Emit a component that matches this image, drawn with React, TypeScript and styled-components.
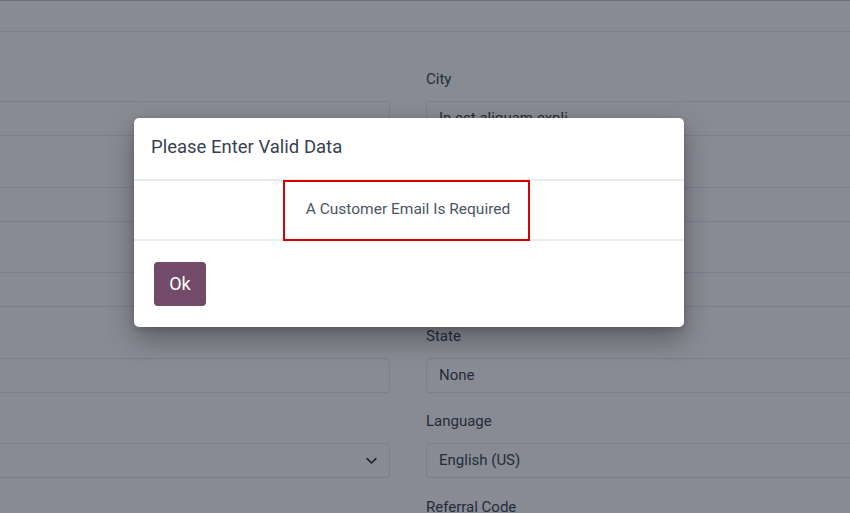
import type React from "react";
import styled, { createGlobalStyle } from "styled-components";

// 전역 스타일
const GlobalStyle = createGlobalStyle`
  html, body {
    margin: 0;
    padding: 0;
    background: #ffffff;
    overflow: hidden;
  }
  * {
    box-sizing: border-box;
  }
  body {
    font-family: "Roboto", "Liberation Sans", sans-serif;
    color: #374151;
  }
`;

const Page = styled.div`
  width: 850px;
  height: 513px;
  overflow: hidden;
  position: relative;
`;

const TopBar = styled.div`
  height: 32px;
  border-top: 1px solid #c4c8cf;
  border-bottom: 1px solid #e5e7eb;
  background: #ffffff;
`;

const Form = styled.div`
  display: grid;
  grid-template-columns: 430px 470px;
  column-gap: 36px;
  margin-left: -40px;
  padding-top: 37px;
`;

const Column = styled.div`
  display: flex;
  flex-direction: column;
  gap: 18.5px;
`;

const Field = styled.div`
  display: flex;
  flex-direction: column;
`;

const Label = styled.label`
  height: 20px;
  line-height: 20px;
  font-size: 15px;
  color: #374151;
  margin-bottom: 12px;
`;

const Input = styled.div`
  height: 35px;
  border: 1px solid #e5e7eb;
  border-radius: 4px;
  padding: 0 12px 1px;
  display: flex;
  align-items: center;
  justify-content: space-between;
  font-size: 15px;
  color: #374151;
  white-space: nowrap;
  overflow: hidden;
`;

const Chevron = () => (
  <svg width="15" height="15" viewBox="0 0 24 24" fill="none" stroke="#1f2937" strokeWidth="2.6" strokeLinecap="round" strokeLinejoin="round" style={{ marginRight: -2 }}>
    <path d="M5 9l7 7 7-7" />
  </svg>
);

const Overlay = styled.div`
  position: absolute;
  inset: 0;
  background: rgba(17, 24, 39, 0.5);
  display: flex;
  align-items: flex-start;
  padding: 118px 0 0 134px;
`;

const Modal = styled.div`
  width: 550px;
  background: #ffffff;
  border-radius: 5px;
  box-shadow: 0 12px 28px rgba(0, 0, 0, 0.32), 0 2px 6px rgba(0, 0, 0, 0.15);
  overflow: hidden;
`;

const ModalHeader = styled.div`
  height: 63px;
  display: flex;
  align-items: center;
  padding: 0 17px 3px;
  border-bottom: 2px solid #e9eaec;
`;

const ModalTitle = styled.h5`
  margin: 0;
  font-size: 18.5px;
  font-weight: 400;
  color: #374151;
`;

const ModalBody = styled.div`
  height: 60px;
  display: flex;
  justify-content: center;
  border-bottom: 2px solid #e9eaec;
`;

const Highlight = styled.div`
  width: 247px;
  margin-left: -6px;
  height: 61px;
  margin-top: -1px;
  border: 2px solid #d60000;
  display: flex;
  align-items: center;
  justify-content: center;
  padding: 0 0 3px 4px;
  font-size: 15.5px;
  color: #4b5563;
`;

const ModalFooter = styled.div`
  height: 86px;
  padding: 21px 20px;
`;

const OkButton = styled.button`
  width: 52px;
  height: 44px;
  border: none;
  border-radius: 4px;
  background: #714b67;
  color: #ffffff;
  font-family: "Roboto", "Liberation Sans", sans-serif;
  font-size: 18px;
  padding-bottom: 3px;
  cursor: pointer;
`;

export default function App() {
  return (
    <Page>
      <GlobalStyle />
      <TopBar />
      <Form>
        <Column>
          <Field>
            <Label>&nbsp;</Label>
            <Input />
          </Field>
          <Field>
            <Label>&nbsp;</Label>
            <Input />
          </Field>
          <Field>
            <Label>&nbsp;</Label>
            <Input />
          </Field>
          <Field>
            <Label>&nbsp;</Label>
            <Input />
          </Field>
          <Field>
            <Label>&nbsp;</Label>
            <Input>
              <span />
              <Chevron />
            </Input>
          </Field>
        </Column>
        <Column>
          <Field>
            <Label>City</Label>
            <Input>In est aliquam expli</Input>
          </Field>
          <Field>
            <Label>Zip</Label>
            <Input />
          </Field>
          <Field>
            <Label>Country</Label>
            <Input />
          </Field>
          <Field>
            <Label>State</Label>
            <Input>None</Input>
          </Field>
          <Field>
            <Label>Language</Label>
            <Input>English (US)</Input>
          </Field>
          <Field>
            <Label>Referral Code</Label>
            <Input />
          </Field>
        </Column>
      </Form>

      <Overlay>
        <Modal>
          <ModalHeader>
            <ModalTitle>Please Enter Valid Data</ModalTitle>
          </ModalHeader>
          <ModalBody>
            <Highlight>A Customer Email Is Required</Highlight>
          </ModalBody>
          <ModalFooter>
            <OkButton>Ok</OkButton>
          </ModalFooter>
        </Modal>
      </Overlay>
    </Page>
  );
}
